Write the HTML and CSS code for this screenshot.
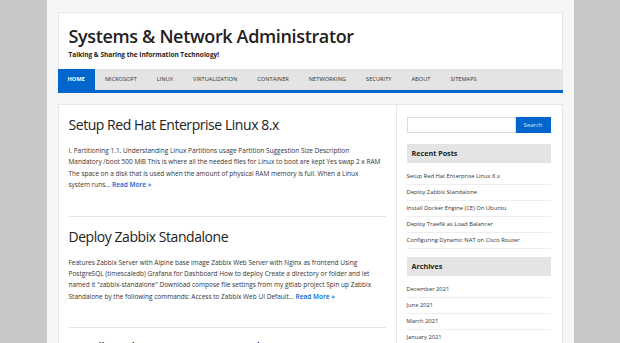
FILE: index.html
```html
<!DOCTYPE html>
<html lang="en">
<head>
    <meta charset="UTF-8">
    <meta name="viewport" content="width=device-width, initial-scale=1.0">
    <title>Systems &amp; Network Administrator</title>
    <link rel="stylesheet" href="styles.css">
</head>
<body>
    <div class="wrapper">
        <!-- Header -->
        <header class="site-header">
            <h1 class="site-title">Systems &amp; Network Administrator</h1>
            <p class="site-description">Talking &amp; Sharing the Information Technology!</p>
        </header>

        <!-- Navigation -->
        <nav class="main-nav">
            <ul>
                <li class="current"><a href="#">Home</a></li>
                <li><a href="#">Microsoft</a></li>
                <li><a href="#">Linux</a></li>
                <li><a href="#">Virtualization</a></li>
                <li><a href="#">Container</a></li>
                <li><a href="#">Networking</a></li>
                <li><a href="#">Security</a></li>
                <li><a href="#">About</a></li>
                <li><a href="#">Sitemaps</a></li>
            </ul>
        </nav>

        <div class="content-wrap">
            <!-- Posts -->
            <main class="content">
                <article class="post">
                    <h2 class="post-title">Setup Red Hat Enterprise Linux 8.x</h2>
                    <p>I. Partitioning 1.1. Understanding Linux Partitions usage Partition Suggestion Size Description Mandatory /boot 500 MiB This is where all the needed files for Linux to boot are kept Yes swap 2 x RAM The space on a disk that is used when the amount of physical RAM memory is full. When a Linux system runs… <a href="#" class="more-link">Read More »</a></p>
                </article>
                <article class="post">
                    <h2 class="post-title">Deploy Zabbix Standalone</h2>
                    <p>Features Zabbix Server with Alpine base image Zabbix Web Server with Nginx as frontend Using PostgreSQL (timescaledb) Grafana for Dashboard How to deploy Create a directory or folder and let named it "zabbix-standalone" Download compose file settings from my gitlab project Spin up Zabbix Standalone by the following commands: Access to Zabbix Web UI Default… <a href="#" class="more-link">Read More »</a></p>
                </article>
                <article class="post">
                    <h2 class="post-title">Install Docker Engine (CE) On Ubuntu</h2>
                </article>
            </main>

            <!-- Sidebar -->
            <aside class="sidebar">
                <form class="search-form">
                    <input type="search" class="search-field">
                    <button type="button" class="search-submit">Search</button>
                </form>

                <div class="widget">
                    <h3 class="widget-title">Recent Posts</h3>
                    <ul>
                        <li><a href="#">Setup Red Hat Enterprise Linux 8.x</a></li>
                        <li><a href="#">Deploy Zabbix Standalone</a></li>
                        <li><a href="#">Install Docker Engine (CE) On Ubuntu</a></li>
                        <li><a href="#">Deploy Traefik as Load Balancer</a></li>
                        <li><a href="#">Configuring Dynamic NAT on Cisco Router</a></li>
                    </ul>
                </div>

                <div class="widget">
                    <h3 class="widget-title">Archives</h3>
                    <ul>
                        <li><a href="#">December 2021</a></li>
                        <li><a href="#">June 2021</a></li>
                        <li><a href="#">March 2021</a></li>
                        <li><a href="#">January 2021</a></li>
                        <li><a href="#">December 2020</a></li>
                    </ul>
                </div>
            </aside>
        </div>
    </div>
</body>
</html>
```

FILE: styles.css
```css
html, body {
    height: 100%;
}

body {
    margin: 0;
    background-color: #c8c8c8;
    font-family: 'Open Sans', sans-serif;
    color: #333333;
    overflow: hidden;
}

a {
    text-decoration: none;
}

.wrapper {
    width: 505px;
    margin: 0 auto;
    padding: 12px 11px;
    min-height: 100%;
    background-color: #f6f6f6;
}

/* Header */
.site-header {
    background-color: #ffffff;
    border: 1px solid #e6e6e6;
    border-bottom: none;
    padding: 11px 10px 8px;
    height: 37px;
}

.site-title {
    margin: 0;
    font-size: 18px;
    line-height: 24px;
    font-weight: 600;
    letter-spacing: -0.35px;
    color: #222222;
}

.site-description {
    margin: 2px 0 0;
    font-size: 6.5px;
    font-weight: bold;
    color: #222222;
}

/* Navigation */
.main-nav {
    background-color: #e4e4e4;
    border-bottom: 3px solid #0066cc;
}

.main-nav ul {
    list-style: none;
    margin: 0;
    padding: 0;
    display: flex;
}

.main-nav li a {
    display: block;
    padding: 0 10px;
    line-height: 21px;
    font-size: 5.7px;
    text-transform: uppercase;
    color: #333333;
}

.main-nav li.current a {
    background-color: #0066cc;
    color: #ffffff;
    font-weight: bold;
}

/* Layout */
.content-wrap {
    display: flex;
    margin-top: 11px;
    background-color: #ffffff;
    border: 1px solid #e6e6e6;
}

.content {
    width: 317px;
    padding: 0 10px;
    border-right: 1px solid #e6e6e6;
}

.post {
    padding: 11px 0 25px;
    border-bottom: 1px solid #dfe6ea;
}

.post-title {
    margin: 0 0 11px;
    font-size: 14px;
    line-height: 18px;
    font-weight: 500;
    letter-spacing: -0.45px;
    color: #222222;
}

.post p {
    margin: 0;
    padding-right: 4px;
    font-size: 6.5px;
    line-height: 11.4px;
}

.more-link {
    color: #0066cc;
    font-weight: 600;
}

/* Sidebar */
.sidebar {
    width: 144px;
    padding: 12px 10px 0;
}

.search-form {
    display: flex;
    margin-bottom: 11px;
}

.search-field {
    flex: 1;
    min-width: 0;
    height: 16px;
    margin: 0;
    padding: 0 4px;
    border: 1px solid #dddddd;
    box-sizing: border-box;
}

.search-submit {
    width: 35px;
    height: 16px;
    margin: 0;
    padding: 0;
    border: none;
    background-color: #0066cc;
    color: #dbe8f7;
    font-family: 'Open Sans', sans-serif;
    font-size: 6px;
}

.widget {
    margin-bottom: 8px;
}

.widget-title {
    margin: 0 0 6px;
    padding: 0 5px;
    line-height: 19px;
    background-color: #e4e4e4;
    font-size: 7.2px;
    color: #222222;
}

.widget ul {
    list-style: none;
    margin: 0;
    padding: 0;
}

.widget li {
    font-size: 5.8px;
    line-height: 15px;
    border-bottom: 1px solid #eeeeee;
}

.widget li a {
    color: #333333;
}
```
